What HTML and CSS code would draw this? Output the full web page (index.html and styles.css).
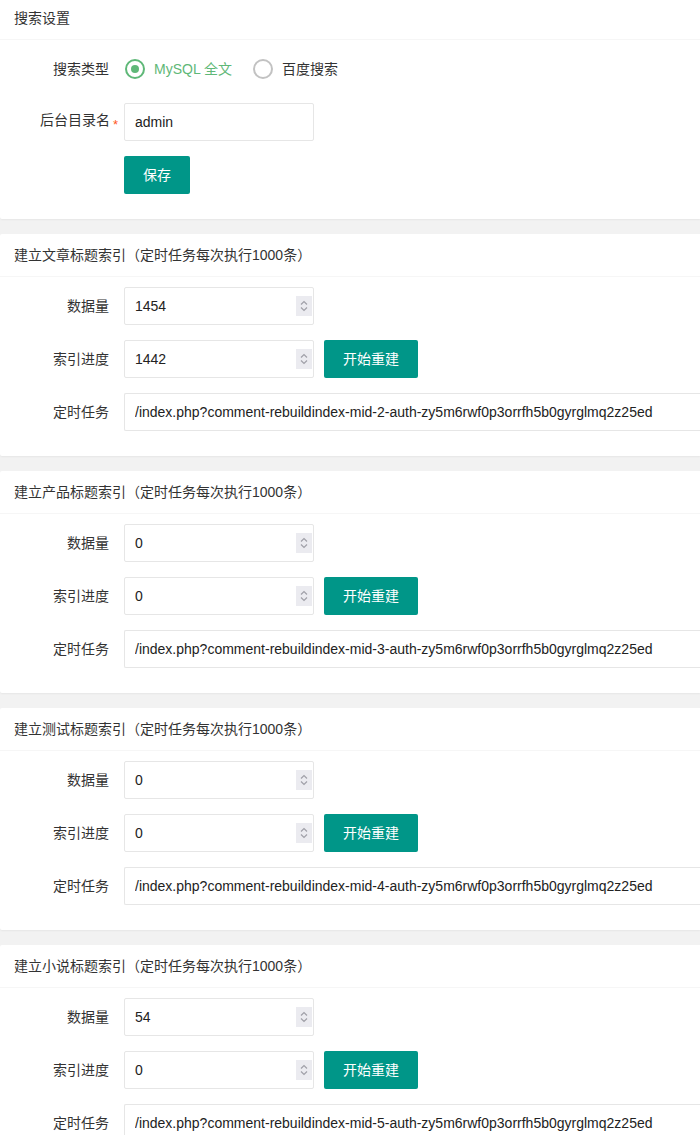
FILE: index.html
```html
<!DOCTYPE html>
<html lang="zh-CN">
<head>
<meta charset="utf-8">
<title>搜索设置</title>
<link rel="stylesheet" href="styles.css">
</head>
<body>
<div class="page">

  <div class="card">
    <div class="card-header">搜索设置</div>
    <div class="card-body">
      <div class="form-item">
        <label class="form-label">搜索类型</label>
        <div class="radios">
          <span class="radio checked">
            <svg width="22" height="22" viewBox="0 0 22 22"><circle cx="11" cy="11" r="9" fill="none" stroke="#5FB878" stroke-width="2"/><circle cx="11" cy="11" r="4" fill="#5FB878"/></svg>
            <span>MySQL 全文</span>
          </span>
          <span class="radio">
            <svg width="22" height="22" viewBox="0 0 22 22"><circle cx="11" cy="11" r="9" fill="none" stroke="#c2c2c2" stroke-width="2"/></svg>
            <span>百度搜索</span>
          </span>
        </div>
      </div>
      <div class="form-item">
        <label class="form-label required">后台目录名<span class="req">*</span></label>
        <div class="field"><input class="input" type="text" value="admin"></div>
      </div>
      <div class="form-item offset">
        <button class="btn">保存</button>
      </div>
    </div>
  </div>

  <div class="card">
    <div class="card-header">建立文章标题索引（定时任务每次执行1000条）</div>
    <div class="card-body">
      <div class="form-item">
        <label class="form-label">数据量</label>
        <div class="field"><input class="input" type="text" value="1454"><span class="spin"><svg width="16" height="20" viewBox="0 0 16 20"><path d="M5 8.5 L8 5.5 L11 8.5 M5 11.5 L8 14.5 L11 11.5" fill="none" stroke="#a0a0a8" stroke-width="1.2"/></svg></span></div>
      </div>
      <div class="form-item">
        <label class="form-label">索引进度</label>
        <div class="field"><input class="input" type="text" value="1442"><span class="spin"><svg width="16" height="20" viewBox="0 0 16 20"><path d="M5 8.5 L8 5.5 L11 8.5 M5 11.5 L8 14.5 L11 11.5" fill="none" stroke="#a0a0a8" stroke-width="1.2"/></svg></span></div>
        <button class="btn">开始重建</button>
      </div>
      <div class="form-item">
        <label class="form-label">定时任务</label>
        <input class="input wide" type="text" value="/index.php?comment-rebuildindex-mid-2-auth-zy5m6rwf0p3orrfh5b0gyrglmq2z25ed">
      </div>
    </div>
  </div>

  <div class="card">
    <div class="card-header">建立产品标题索引（定时任务每次执行1000条）</div>
    <div class="card-body">
      <div class="form-item">
        <label class="form-label">数据量</label>
        <div class="field"><input class="input" type="text" value="0"><span class="spin"><svg width="16" height="20" viewBox="0 0 16 20"><path d="M5 8.5 L8 5.5 L11 8.5 M5 11.5 L8 14.5 L11 11.5" fill="none" stroke="#a0a0a8" stroke-width="1.2"/></svg></span></div>
      </div>
      <div class="form-item">
        <label class="form-label">索引进度</label>
        <div class="field"><input class="input" type="text" value="0"><span class="spin"><svg width="16" height="20" viewBox="0 0 16 20"><path d="M5 8.5 L8 5.5 L11 8.5 M5 11.5 L8 14.5 L11 11.5" fill="none" stroke="#a0a0a8" stroke-width="1.2"/></svg></span></div>
        <button class="btn">开始重建</button>
      </div>
      <div class="form-item">
        <label class="form-label">定时任务</label>
        <input class="input wide" type="text" value="/index.php?comment-rebuildindex-mid-3-auth-zy5m6rwf0p3orrfh5b0gyrglmq2z25ed">
      </div>
    </div>
  </div>

  <div class="card">
    <div class="card-header">建立测试标题索引（定时任务每次执行1000条）</div>
    <div class="card-body">
      <div class="form-item">
        <label class="form-label">数据量</label>
        <div class="field"><input class="input" type="text" value="0"><span class="spin"><svg width="16" height="20" viewBox="0 0 16 20"><path d="M5 8.5 L8 5.5 L11 8.5 M5 11.5 L8 14.5 L11 11.5" fill="none" stroke="#a0a0a8" stroke-width="1.2"/></svg></span></div>
      </div>
      <div class="form-item">
        <label class="form-label">索引进度</label>
        <div class="field"><input class="input" type="text" value="0"><span class="spin"><svg width="16" height="20" viewBox="0 0 16 20"><path d="M5 8.5 L8 5.5 L11 8.5 M5 11.5 L8 14.5 L11 11.5" fill="none" stroke="#a0a0a8" stroke-width="1.2"/></svg></span></div>
        <button class="btn">开始重建</button>
      </div>
      <div class="form-item">
        <label class="form-label">定时任务</label>
        <input class="input wide" type="text" value="/index.php?comment-rebuildindex-mid-4-auth-zy5m6rwf0p3orrfh5b0gyrglmq2z25ed">
      </div>
    </div>
  </div>

  <div class="card">
    <div class="card-header">建立小说标题索引（定时任务每次执行1000条）</div>
    <div class="card-body">
      <div class="form-item">
        <label class="form-label">数据量</label>
        <div class="field"><input class="input" type="text" value="54"><span class="spin"><svg width="16" height="20" viewBox="0 0 16 20"><path d="M5 8.5 L8 5.5 L11 8.5 M5 11.5 L8 14.5 L11 11.5" fill="none" stroke="#a0a0a8" stroke-width="1.2"/></svg></span></div>
      </div>
      <div class="form-item">
        <label class="form-label">索引进度</label>
        <div class="field"><input class="input" type="text" value="0"><span class="spin"><svg width="16" height="20" viewBox="0 0 16 20"><path d="M5 8.5 L8 5.5 L11 8.5 M5 11.5 L8 14.5 L11 11.5" fill="none" stroke="#a0a0a8" stroke-width="1.2"/></svg></span></div>
        <button class="btn">开始重建</button>
      </div>
      <div class="form-item">
        <label class="form-label">定时任务</label>
        <input class="input wide" type="text" value="/index.php?comment-rebuildindex-mid-5-auth-zy5m6rwf0p3orrfh5b0gyrglmq2z25ed">
      </div>
    </div>
  </div>

</div>
</body>
</html>
```

FILE: styles.css
```css
* {
  box-sizing: border-box;
}

html,
body {
  margin: 0;
  padding: 0;
  overflow: hidden;
  background: #f2f2f2;
}

body {
  font-family: "Liberation Sans", "Noto Sans CJK SC", sans-serif;
  font-size: 14px;
  line-height: 20px;
  color: #333;
}

.page {
  width: 700px;
  margin-top: -3px;
  display: flex;
  flex-direction: column;
  gap: 15px;
}

.card {
  background: #fff;
  border-radius: 2px 0 0 2px;
  box-shadow: 0 1px 2px 0 rgba(0, 0, 0, 0.05);
}

.card-header {
  height: 43px;
  line-height: 42px;
  padding: 0 14px;
  border-bottom: 1px solid #f6f6f6;
  color: #333;
  font-size: 14px;
}

.card-body {
  padding: 10px 0 25px 14px;
  display: flex;
  flex-direction: column;
  gap: 15px;
}

.form-item {
  display: flex;
  align-items: center;
  height: 38px;
}

.form-item.offset {
  padding-left: 110px;
}

.form-label {
  flex: none;
  width: 110px;
  padding: 9px 15px;
  line-height: 20px;
  text-align: right;
  color: #333;
}

.form-label.required {
  padding-right: 6px;
}

.req {
  color: #ff5722;
  margin-left: 3px;
  font-size: 13px;
  vertical-align: -4px;
}

.radios {
  display: flex;
  align-items: center;
}

.radio {
  display: inline-flex;
  align-items: center;
  gap: 8px;
  padding-right: 10px;
  margin-right: 10px;
  line-height: 28px;
  color: #333;
}

.radio svg {
  display: block;
  flex: none;
}

.radio.checked {
  color: #5fb878;
}

.field {
  position: relative;
  flex: none;
  width: 190px;
  margin-right: 10px;
}

.input {
  display: block;
  width: 190px;
  height: 38px;
  padding: 0 10px;
  border: 1px solid #e6e6e6;
  border-radius: 2px;
  background: #fff;
  font-family: "Liberation Sans", "Noto Sans CJK SC", sans-serif;
  font-size: 14px;
  color: #222;
  outline: none;
}

.input.wide {
  flex: 1;
  width: auto;
  min-width: 0;
  border-right: none;
  border-radius: 2px 0 0 2px;
}

.spin {
  position: absolute;
  right: 2px;
  top: 9px;
  width: 16px;
  height: 20px;
  background: #ebebf0;
}

.spin svg {
  display: block;
}

.btn {
  flex: none;
  height: 38px;
  padding: 0 18px;
  border: 1px solid transparent;
  border-radius: 2px;
  background: #009688;
  color: #fff;
  font-family: "Liberation Sans", "Noto Sans CJK SC", sans-serif;
  font-size: 14px;
  line-height: 36px;
  white-space: nowrap;
  cursor: pointer;
}
```
